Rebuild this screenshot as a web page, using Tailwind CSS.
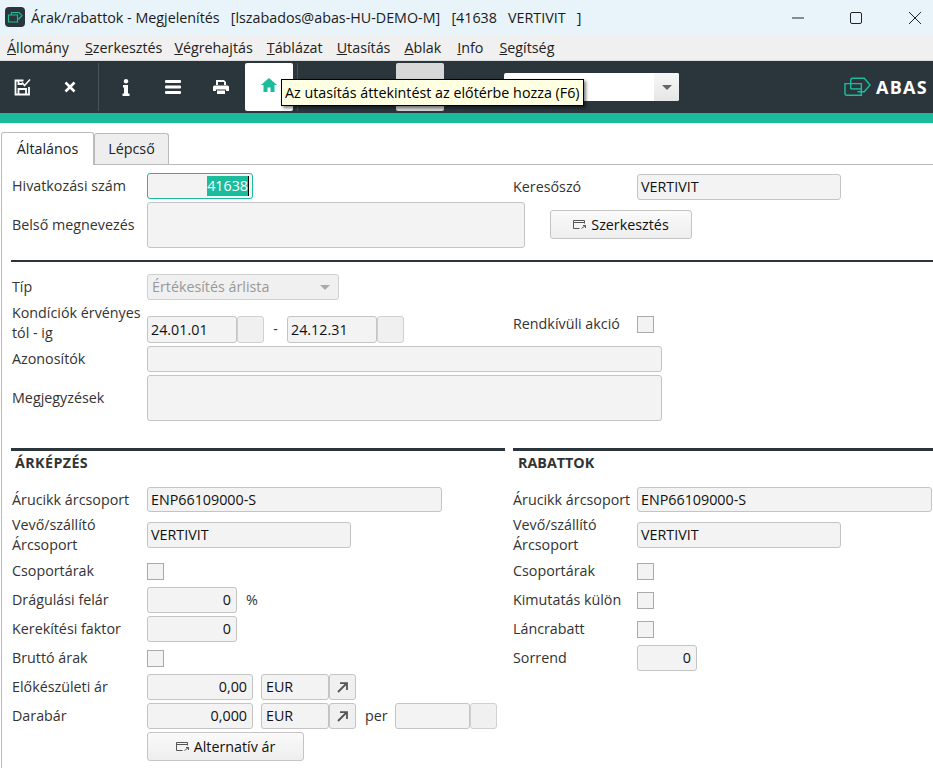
<!DOCTYPE html>
<html lang="hu">
<head>
    <meta charset="UTF-8">
    <script src="https://cdn.jsdelivr.net/npm/@tailwindcss/browser@4"></script>
    <title>Árak/rabattok</title>
</head>
<body class="w-[933px] h-[769px] overflow-hidden bg-white font-['Open_Sans',sans-serif] text-[14.3px] text-[#333]">

<!-- title bar -->
<div class="flex items-center h-9 bg-[#e8f4fa] text-[#1a1a1a]">
    <svg class="ml-[5px] mb-[2px] w-5 h-5" viewBox="0 0 20 20"><rect width="20" height="20" rx="4" fill="#2b363c"/><path d="M3.500 8h9v7h-9zM6.500 8V5.500h7.500l3 3-3 3.500h-1.500" fill="none" stroke="#1abc9c" stroke-width="1.200"/></svg>
    <span class="ml-[6px] whitespace-pre">Árak/rabattok - Megjelenítés   [lszabados@abas-HU-DEMO-M]   [41638   VERTIVIT   ]</span>
    <div class="ml-auto flex items-center">
        <svg class="w-3 h-3" viewBox="0 0 12 12"><path d="M0 6h12" stroke="#222"/></svg>
        <svg class="ml-[46px] w-3 h-3" viewBox="0 0 12 12"><rect x=".5" y=".5" width="11" height="11" rx="1.500" fill="none" stroke="#222"/></svg>
        <svg class="ml-[47px] mr-[12px] w-3 h-3" viewBox="0 0 12 12"><path d="M0 0l12 12M12 0L0 12" stroke="#222"/></svg>
    </div>
</div>

<!-- menu -->
<div class="flex items-center h-[24px] pl-[7px] bg-[#f0f0f0] text-[#222]">
    <span><u>Á</u>llomány</span><span class="ml-[16px]"><u>S</u>zerkesztés</span><span class="ml-[12px]"><u>V</u>égrehajtás</span><span class="ml-[14px]"><u>T</u>áblázat</span><span class="ml-[14px]"><u>U</u>tasítás</span><span class="ml-[14px]"><u>A</u>blak</span><span class="ml-[16px]"><u>I</u>nfo</span><span class="ml-[16px]"><u>S</u>egítség</span>
</div>

<!-- toolbar -->
<div class="relative flex items-center h-[53px] bg-[#2b363c] border-t border-[#ddd]">
    <div class="flex items-center justify-center w-[49px] h-12 ml-[-2px]">
        <svg class="w-[17px] h-[17px]" viewBox="0 0 17 17" fill="none" stroke="#fff" stroke-width="1.800"><path d="M9.500 1.500H1.500v14h13.500V8"/><path d="M4.500 15.500V10h7.500v5.500M4.500 1.500V5h4"/><path d="M8 3.500l2.500 3L16 .5" stroke-width="1.500"/></svg>
    </div>
    <div class="flex items-center justify-center w-[46px] h-12">
        <svg class="w-3 h-3" viewBox="0 0 12 12"><path d="M1.500 1.500l9 9M10.500 1.500l-9 9" stroke="#fff" stroke-width="2.600"/></svg>
    </div>
    <div class="w-px h-12 bg-[#47525a] ml-[5px]"></div>
    <div class="flex items-center justify-center w-[54px] h-12">
        <svg class="w-2 h-[17px]" viewBox="0 0 8 17" fill="#fff"><circle cx="4" cy="2.200" r="2.200"/><path d="M1 6h5v8.500h1.500V17H.500v-2.500H2V8.500H1z"/></svg>
    </div>
    <div class="flex items-center justify-center w-[40px] h-12">
        <svg class="w-4 h-[14px]" viewBox="0 0 16 14" fill="#fff"><rect y="0" width="16" height="3" rx="1"/><rect y="5.500" width="16" height="3" rx="1"/><rect y="11" width="16" height="3" rx="1"/></svg>
    </div>
    <div class="flex items-center justify-center w-[54px] h-12 mr-[-2px] pl-[2px]">
        <svg class="w-4 h-4" viewBox="0 0 16 16" fill="#fff"><path d="M3 1h8l2 2v3h-2V3H5v3H3zM1.500 6.500h13a1.500 1.500 0 0 1 1.500 1.500v4h-3v-1.500H3V12H0V8a1.500 1.500 0 0 1 1.500-1.500zM4 11.500h8V15H4z"/></svg>
    </div>
    <div class="flex items-start justify-center w-[48px] h-12 pt-[15px] bg-white rounded-[2px] shrink-0">
        <svg class="w-4 h-[14px]" viewBox="0 0 16 14" fill="#1abc9c"><path d="M8 0L0 7h2.500v7h4V9.500h3V14h4V7H16z"/></svg>
    </div>
    <div class="w-px h-12 bg-[#47525a] ml-[4px]"></div>
    <div class="w-[48px] h-12 ml-[98px] bg-[#d8d8d8] rounded-[2px]"></div>
    <div class="flex justify-end items-center w-[175px] h-7 ml-[60px] bg-white rounded-[2px]">
        <div class="flex items-center justify-center w-[25px] h-7 bg-gradient-to-b from-[#f7f7f7] to-[#e6e6e6] rounded-r-[2px]">
            <div class="border-x-[5px] border-x-transparent border-t-[5px] border-t-[#666]"></div>
        </div>
    </div>
    <svg class="ml-auto w-[27px] h-[20px]" viewBox="0 0 28 20" fill="none" stroke="#1abc9c" stroke-width="1.500"><path d="M1 6.500h17v12H3a2 2 0 0 1-2-2z"/><path d="M7 12V3a2 2 0 0 1 2-2h12l6 7-6 7h-7"/><path d="M7 12h11"/></svg>
    <span class="ml-[5px] mr-[5px] text-[18px] font-bold tracking-[1.300px] text-white">ABAS</span>

    <div class="absolute left-[281px] top-[18px] flex items-center h-[27px] px-[3px] bg-[#ffffe1] border border-black text-black whitespace-nowrap shadow-[2px_2px_3px_rgba(0,0,0,.5)]">Az utasítás áttekintést az előtérbe hozza (F6)</div>
</div>
<div class="h-[10px] bg-[#1abc9c]"></div>

<!-- tabs -->
<div class="flex items-end h-[32px] mt-[9px] pl-[1px]">
    <div class="flex items-center justify-center w-[93px] h-[33px] mb-[-1px] bg-white border border-b-0 border-[#bbb] rounded-t-[3px] z-10 text-[#222]">Általános</div>
    <div class="flex items-center justify-center w-[75px] h-[31px] bg-[#eee] border border-b-0 border-[#bbb] rounded-t-[3px] text-[#222]">Lépcső</div>
</div>

<!-- pane -->
<div class="ml-[1px] h-[604px] border-l border-t border-[#bbb] pl-[10px] pt-[8px]">

    <div class="flex">
        <div class="w-[501px] flex flex-col gap-[3px]">
            <div class="flex items-center">
                <span class="w-[135px]">Hivatkozási szám</span>
                <div class="flex justify-end items-center w-[106px] h-[26px] pr-[3px] bg-[#f3f3f3] border border-[#1abc9c] rounded-[3px] text-[#222]"><span class="bg-[#1abc9c] text-white border-r border-black leading-[20px]">41638</span></div>
            </div>
            <div class="flex items-center">
                <span class="w-[135px] shrink-0">Belső megnevezés</span>
                <div class="w-[378px] h-[46px] shrink-0 bg-[#f3f3f3] border border-[#c4c4c4] rounded-[3px]"></div>
            </div>
        </div>
        <div class="flex flex-col pt-px">
            <div class="flex items-center">
                <span class="w-[124px]">Keresőszó</span>
                <div class="flex items-center w-[204px] h-[26px] pl-[3px] bg-[#f3f3f3] border border-[#c4c4c4] rounded-[3px] text-[#111]">VERTIVIT</div>
            </div>
            <button class="flex items-center justify-center gap-[4px] w-[142px] h-[29px] ml-[37px] mt-[10px] bg-gradient-to-b from-[#fafafa] to-[#eee] border border-[#c4c4c4] rounded-[3px] text-[#111]">
                <svg class="w-[14px] h-[11px]" viewBox="0 0 14 11" fill="none" stroke="#555"><path d="M.5 9.500v-8h11v3M.5 3.500h11M.500 9.500h6M8.500 9.500l4-3M10 6.500h2.500V9"/></svg>
                Szerkesztés
            </button>
        </div>
    </div>

    <div class="h-[2px] -ml-px bg-[#2b363c] mt-[12px]"></div>

    <div class="flex flex-col mt-[12px]">
        <div class="flex items-center">
            <span class="w-[135px]">Típ</span>
            <div class="flex items-center justify-between w-[192px] h-[26px] px-[4px] pr-[8px] bg-[#f0f0f0] border border-[#d0d0d0] rounded-[3px] text-[#999]">Értékesítés árlista<div class="border-x-[5px] border-x-transparent border-t-[5px] border-t-[#aaa]"></div></div>
        </div>
        <div class="flex items-end mt-[3px]">
            <span class="w-[135px] leading-[20px]">Kondíciók érvényes<br>tól - ig</span>
            <div class="flex items-center w-[90px] h-[27px] pl-[3px] bg-[#f3f3f3] border border-[#c4c4c4] rounded-[3px] text-[#111]">24.01.01</div>
            <div class="w-[27px] h-[27px] bg-[#f0f0f0] border border-[#d0d0d0] rounded-[3px]"></div>
            <span class="w-[23px] text-center self-center mt-[12px]">-</span>
            <div class="flex items-center w-[90px] h-[27px] pl-[3px] bg-[#f3f3f3] border border-[#c4c4c4] rounded-[3px] text-[#111]">24.12.31</div>
            <div class="w-[27px] h-[27px] bg-[#f0f0f0] border border-[#d0d0d0] rounded-[3px]"></div>
            <span class="w-[124px] ml-[109px] self-center mt-[2px]">Rendkívüli akció</span>
            <div class="w-[17px] h-[17px] self-center mt-[2px] bg-[#f3f3f3] border border-[#aaa]"></div>
        </div>
        <div class="flex items-center mt-[3px]">
            <span class="w-[135px]">Azonosítók</span>
            <div class="w-[515px] h-[26px] bg-[#f3f3f3] border border-[#c4c4c4] rounded-[3px]"></div>
        </div>
        <div class="flex items-center mt-[3px]">
            <span class="w-[135px]">Megjegyzések</span>
            <div class="w-[515px] h-[46px] bg-[#f3f3f3] border border-[#c4c4c4] rounded-[3px]"></div>
        </div>
    </div>

    <div class="flex gap-[8px] mt-[27px]">
        <!-- left column -->
        <div class="w-[493px] shrink-0">
            <div class="h-[3px] -ml-px bg-[#2b363c]"></div>
            <div class="pl-[3px] h-[24px] flex items-center font-bold tracking-[.4px] text-[#333]">ÁRKÉPZÉS</div>
            <div class="flex flex-col mt-[12px]">
                <div class="flex items-center h-[25px]">
                    <span class="w-[135px]">Árucikk árcsoport</span>
                    <div class="flex items-center w-[295px] h-[25px] pl-[3px] bg-[#f3f3f3] border border-[#c4c4c4] rounded-[3px] text-[#111]">ENP66109000-S</div>
                </div>
                <div class="flex items-center h-[38px] mt-[4px]">
                    <span class="w-[135px] leading-[20px]">Vevő/szállító<br>Árcsoport</span>
                    <div class="flex items-center w-[204px] h-[26px] pl-[3px] bg-[#f3f3f3] border border-[#c4c4c4] rounded-[3px] text-[#111]">VERTIVIT</div>
                </div>
                <div class="flex items-center h-[18px] mt-[8px]">
                    <span class="w-[135px]">Csoportárak</span>
                    <div class="w-[17px] h-[17px] bg-[#f3f3f3] border border-[#aaa]"></div>
                </div>
                <div class="flex items-center h-[26px] mt-[7px]">
                    <span class="w-[135px]">Drágulási felár</span>
                    <div class="flex items-center justify-end w-[90px] h-[26px] pr-[5px] bg-[#f3f3f3] border border-[#c4c4c4] rounded-[3px] text-[#111]">0</div>
                    <span class="ml-[9px]">%</span>
                </div>
                <div class="flex items-center h-[26px] mt-[3px]">
                    <span class="w-[135px]">Kerekítési faktor</span>
                    <div class="flex items-center justify-end w-[90px] h-[26px] pr-[5px] bg-[#f3f3f3] border border-[#c4c4c4] rounded-[3px] text-[#111]">0</div>
                </div>
                <div class="flex items-center h-[18px] mt-[7px]">
                    <span class="w-[135px]">Bruttó árak</span>
                    <div class="w-[17px] h-[17px] bg-[#f3f3f3] border border-[#aaa]"></div>
                </div>
                <div class="flex items-center h-[26px] mt-[7px]">
                    <span class="w-[135px]">Előkészületi ár</span>
                    <div class="flex items-center justify-end w-[106px] h-[26px] pr-[5px] bg-[#f3f3f3] border border-[#c4c4c4] rounded-[3px] text-[#111]">0,00</div>
                    <div class="flex items-center w-[68px] h-[26px] ml-[8px] pl-[4px] bg-[#f3f3f3] border border-[#c4c4c4] rounded-[3px] text-[#111]">EUR</div>
                    <div class="flex items-center justify-center w-[27px] h-[26px] bg-[#f0f0f0] border border-[#c4c4c4] rounded-[3px]">
                        <svg class="w-[11px] h-[11px]" viewBox="0 0 11 11" fill="none" stroke="#555" stroke-width="1.800"><path d="M1 10l8.500-8.500M3 1.200h7V8"/></svg>
                    </div>
                </div>
                <div class="flex items-center h-[26px] mt-[3px]">
                    <span class="w-[135px]">Darabár</span>
                    <div class="flex items-center justify-end w-[106px] h-[26px] pr-[5px] bg-[#f3f3f3] border border-[#c4c4c4] rounded-[3px] text-[#111]">0,000</div>
                    <div class="flex items-center w-[68px] h-[26px] ml-[8px] pl-[4px] bg-[#f3f3f3] border border-[#c4c4c4] rounded-[3px] text-[#111]">EUR</div>
                    <div class="flex items-center justify-center w-[27px] h-[26px] bg-[#f0f0f0] border border-[#c4c4c4] rounded-[3px]">
                        <svg class="w-[11px] h-[11px]" viewBox="0 0 11 11" fill="none" stroke="#555" stroke-width="1.800"><path d="M1 10l8.500-8.500M3 1.200h7V8"/></svg>
                    </div>
                    <span class="ml-[9px] w-[30px]">per</span>
                    <div class="w-[75px] h-[26px] bg-[#f3f3f3] border border-[#c4c4c4] rounded-[3px]"></div>
                    <div class="w-[27px] h-[26px] bg-[#f0f0f0] border border-[#d0d0d0] rounded-[3px]"></div>
                </div>
                <button class="flex items-center justify-center gap-[4px] w-[157px] h-[29px] ml-[135px] mt-[3px] bg-gradient-to-b from-[#fafafa] to-[#eee] border border-[#c4c4c4] rounded-[3px] text-[#111]">
                    <svg class="w-[14px] h-[11px]" viewBox="0 0 14 11" fill="none" stroke="#555"><path d="M.5 9.500v-8h11v3M.5 3.500h11M.500 9.500h6M8.500 9.500l4-3M10 6.500h2.500V9"/></svg>
                    Alternatív ár
                </button>
            </div>
        </div>

        <!-- right column -->
        <div class="flex-1">
            <div class="h-[3px] bg-[#2b363c]"></div>
            <div class="pl-[5px] h-[24px] flex items-center font-bold text-[#333]">RABATTOK</div>
            <div class="flex flex-col mt-[12px]">
                <div class="flex items-center h-[25px]">
                    <span class="w-[124px]">Árucikk árcsoport</span>
                    <div class="flex items-center w-[295px] h-[25px] pl-[3px] bg-[#f3f3f3] border border-[#c4c4c4] rounded-[3px] text-[#111]">ENP66109000-S</div>
                </div>
                <div class="flex items-center h-[38px] mt-[4px]">
                    <span class="w-[124px] leading-[20px]">Vevő/szállító<br>Árcsoport</span>
                    <div class="flex items-center w-[204px] h-[26px] pl-[3px] bg-[#f3f3f3] border border-[#c4c4c4] rounded-[3px] text-[#111]">VERTIVIT</div>
                </div>
                <div class="flex items-center h-[18px] mt-[8px]">
                    <span class="w-[124px]">Csoportárak</span>
                    <div class="w-[17px] h-[17px] bg-[#f3f3f3] border border-[#aaa]"></div>
                </div>
                <div class="flex items-center h-[18px] mt-[11px]">
                    <span class="w-[124px]">Kimutatás külön</span>
                    <div class="w-[17px] h-[17px] bg-[#f3f3f3] border border-[#aaa]"></div>
                </div>
                <div class="flex items-center h-[18px] mt-[11px]">
                    <span class="w-[124px]">Láncrabatt</span>
                    <div class="w-[17px] h-[17px] bg-[#f3f3f3] border border-[#aaa]"></div>
                </div>
                <div class="flex items-center h-[26px] mt-[7px]">
                    <span class="w-[124px]">Sorrend</span>
                    <div class="flex items-center justify-end w-[60px] h-[26px] pr-[5px] bg-[#f3f3f3] border border-[#c4c4c4] rounded-[3px] text-[#111]">0</div>
                </div>
            </div>
        </div>
    </div>
</div>
</body>
</html>
